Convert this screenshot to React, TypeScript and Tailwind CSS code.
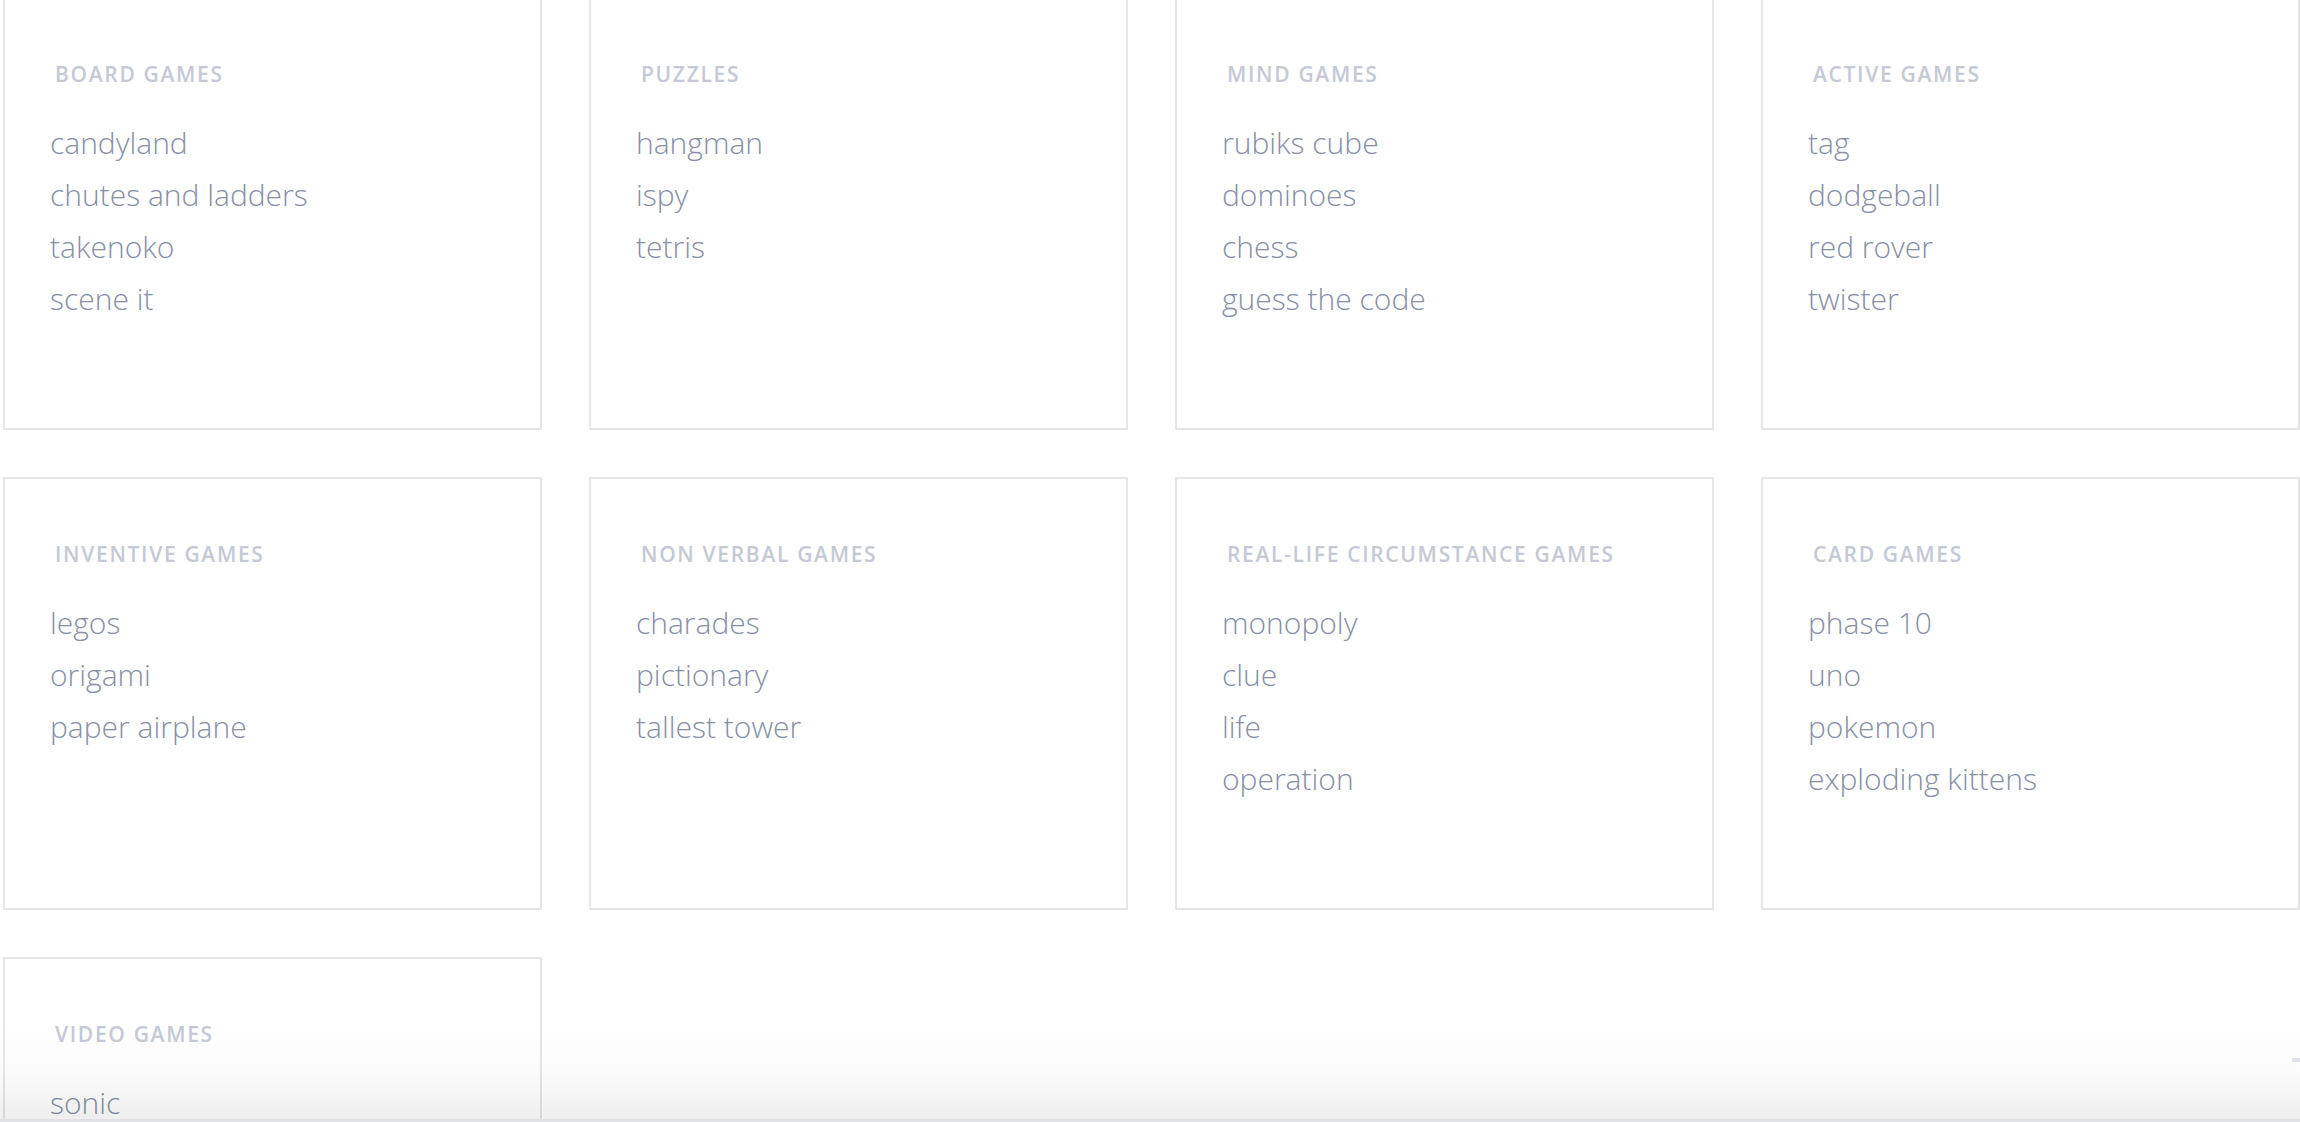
const categories: { title: string; games: string[] }[] = [
  { title: 'Board Games', games: ['candyland', 'chutes and ladders', 'takenoko', 'scene it'] },
  { title: 'Puzzles', games: ['hangman', 'ispy', 'tetris'] },
  { title: 'Mind Games', games: ['rubiks cube', 'dominoes', 'chess', 'guess the code'] },
  { title: 'Active Games', games: ['tag', 'dodgeball', 'red rover', 'twister'] },
  { title: 'Inventive Games', games: ['legos', 'origami', 'paper airplane'] },
  { title: 'Non Verbal Games', games: ['charades', 'pictionary', 'tallest tower'] },
  { title: 'Real-Life Circumstance Games', games: ['monopoly', 'clue', 'life', 'operation'] },
  { title: 'Card Games', games: ['phase 10', 'uno', 'pokemon', 'exploding kittens'] },
  { title: 'Video Games', games: ['sonic'] },
];

function CategoryCard({ title, games }: { title: string; games: string[] }) {
  return (
    <div className="h-[433px] border-2 border-[#e6e6e6] bg-white pl-[45px] pt-[61px]">
      <h3 className="ml-[5px] text-[21px] leading-[28px] font-semibold uppercase tracking-[0.08em] text-[#c4c9d3]">
        {title}
      </h3>
      <ul className="mt-[29px]">
        {games.map((g) => (
          <li key={g} className="text-[30px] leading-[52px] font-light text-[#868fa4]">
            {g}
          </li>
        ))}
      </ul>
    </div>
  );
}

export default function App() {
  return (
    <div className="relative h-[1122px] overflow-hidden bg-white font-['Open_Sans',sans-serif]">
      <div className="-mt-[3px] grid grid-cols-4 gap-x-[47px] gap-y-[47px] pl-[3px]">
        {categories.map((c) => (
          <CategoryCard key={c.title} title={c.title} games={c.games} />
        ))}
      </div>

      {/* bottom fade */}
      <div className="pointer-events-none absolute inset-x-0 bottom-0 h-[100px] border-b-[3px] border-[#dfe1e5] bg-gradient-to-b from-black/0 via-black/[0.015] to-black/[0.065]" />
      <div className="absolute right-0 bottom-[60px] h-[4px] w-[8px] bg-[#dfe2e7]" />
    </div>
  );
}
